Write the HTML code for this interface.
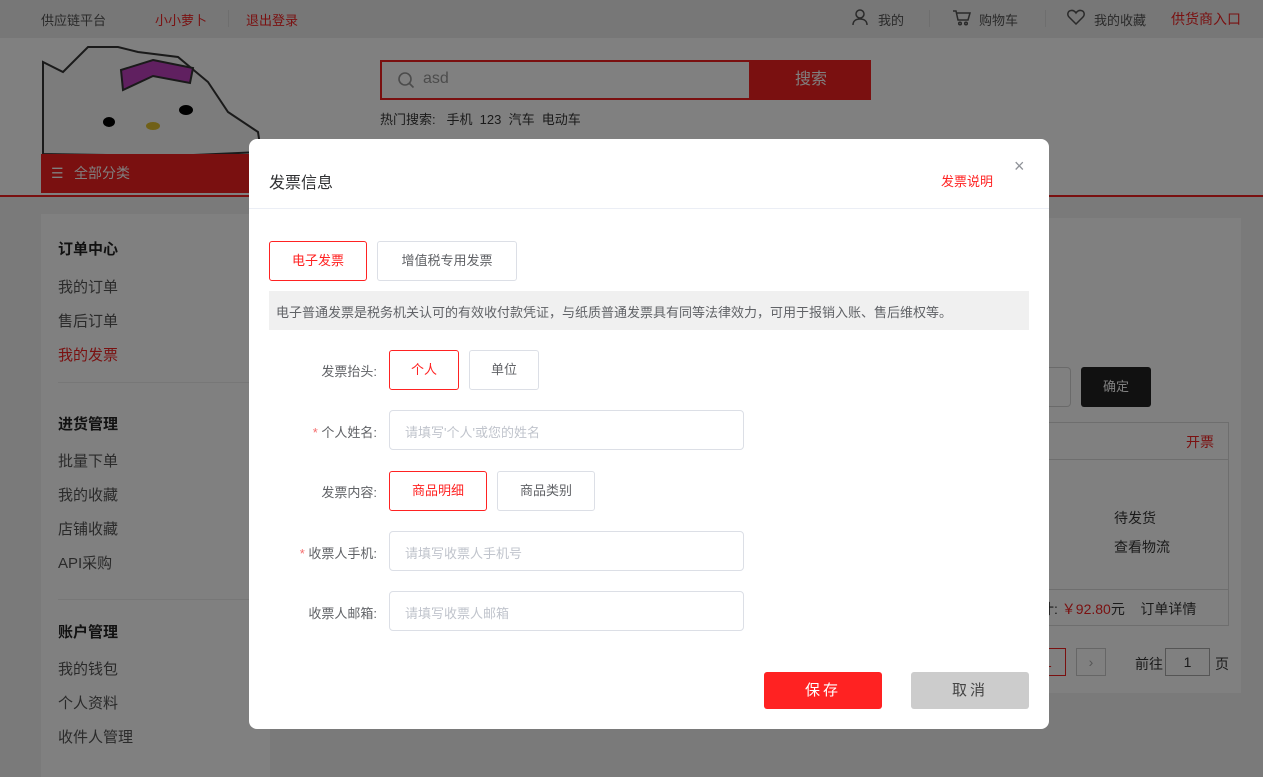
<!DOCTYPE html>
<html style="width:1263px;height:777px;overflow:hidden;background:#7a7a7a"><head><meta charset="utf-8"><style>
*{margin:0;padding:0;box-sizing:border-box}
body{width:1263px;height:777px;overflow:hidden;position:relative;background:#7a7a7a;font-family:"Liberation Sans","Noto Sans CJK SC",sans-serif;font-size:14px;color:#1a1a1a}
.abs{position:absolute}
.top{left:0;top:0;width:1263px;height:38px;background:#777;font-size:13px}
.top span{position:absolute;top:10px}
.hdr{left:0;top:38px;width:1263px;height:159px;background:#808080;border-bottom:2px solid #7a1010}
.side{left:41px;top:214px;width:229px;height:563px;background:#808080}
.side div{position:absolute;left:17px;font-size:15px;color:#2a2a2a}
.side .h{font-weight:bold;color:#111}
.main{left:290px;top:218px;width:951px;height:475px;background:#808080}
.modal{left:249px;top:139px;width:800px;height:590px;background:#fff;border-radius:8px}
.btn{position:absolute;border:1px solid #dcdfe6;border-radius:3px;text-align:center;font-size:13px;color:#606266;background:#fff}
.btn.on{border-color:#f22;color:#f22}
.lab{position:absolute;width:128px;text-align:right;font-size:13px;color:#606266}
.inp{position:absolute;left:140px;width:355px;height:40px;border:1px solid #dcdfe6;border-radius:4px;font-size:13px;color:#c0c4cc;padding:11px 15px}
.star{color:#f56c6c}
</style></head><body>
<div class="abs top">
<span style="left:41px;color:#2a2a2a">供应链平台</span>
<span style="left:155px;color:#7a1010">小小萝卜</span>
<span style="left:228px;top:10px;width:1px;height:17px;background:#6e6e6e"></span>
<span style="left:246px;color:#7a1010">退出登录</span>
<svg class="abs" style="left:851px;top:8px" width="18" height="18" viewBox="0 0 18 18" fill="none" stroke="#2a2a2a" stroke-width="1.5"><circle cx="9" cy="6" r="4"/><path d="M2 17c0-4 3-6 7-6s7 2 7 6"/></svg>
<span style="left:878px;color:#2a2a2a">我的</span>
<span style="left:929px;width:1px;height:17px;background:#6e6e6e"></span>
<svg class="abs" style="left:952px;top:9px" width="19" height="17" viewBox="0 0 19 17" fill="none" stroke="#2a2a2a" stroke-width="1.5"><path d="M1 2h3l2 9h10l2-7H5"/><circle cx="8" cy="14.5" r="1.3"/><circle cx="14" cy="14.5" r="1.3"/></svg>
<span style="left:979px;color:#2a2a2a">购物车</span>
<span style="left:1045px;width:1px;height:17px;background:#6e6e6e"></span>
<svg class="abs" style="left:1067px;top:9px" width="18" height="16" viewBox="0 0 18 16" fill="none" stroke="#2a2a2a" stroke-width="1.5"><path d="M9 15L2 8C0 6 0.5 2 4 1.5 6 1.2 8 2.5 9 4c1-1.5 3-2.8 5-2.5 3.5.5 4 4.5 2 6.5z"/></svg>
<span style="left:1094px;color:#2a2a2a">我的收藏</span>
<span style="left:1171px;color:#7a1010;font-size:14px;top:9px">供货商入口</span>
</div>
<div class="abs hdr">
<svg class="abs" style="left:41px;top:4px" width="230" height="112" viewBox="0 0 230 112">
<path d="M2 20l20 10 25-25 30 0 20 5 40 5 30 25 20 30 30 20 3 20-90 4L2 112z" fill="#7c7c7c" stroke="#1a1a1a" stroke-width="2"/>
<path d="M112 18l40 8-3 15-37-7-30 14-2-20z" fill="#602060" stroke="#1a1a1a" stroke-width="2"/>
<ellipse cx="68" cy="80" rx="6" ry="5" fill="#000"/><ellipse cx="145" cy="68" rx="7" ry="5" fill="#000"/><ellipse cx="112" cy="84" rx="7" ry="4" fill="#706018"/>
</svg>
<div class="abs" style="left:380px;top:22px;width:371px;height:40px;border:2px solid #7a1010;background:#808080"><svg class="abs" style="left:15px;top:9px" width="18" height="18" viewBox="0 0 18 18" fill="none" stroke="#4c4c4c" stroke-width="1.6"><circle cx="8" cy="8" r="6"/><path d="M12.5 12.5l4 4"/></svg><span class="abs" style="left:41px;top:8px;font-size:16px;color:#4c4c4c">asd</span></div>
<div class="abs" style="left:751px;top:22px;width:120px;height:40px;background:#7a1010;color:#808080;font-size:16px;text-align:center;line-height:40px">搜索</div>
<div class="abs" style="left:380px;top:71px;font-size:13px;color:#1a1a1a">热门搜索:&nbsp;&nbsp; 手机 &nbsp;123 &nbsp;汽车 &nbsp;电动车</div>
<div class="abs" style="left:41px;top:116px;width:215px;height:39px;background:#7a1010;color:#808080;font-size:14px;line-height:39px;padding-left:33px">全部分类<span class="abs" style="left:10px;top:0">☰</span></div>
</div>
<div class="abs side">
<div class="h" style="top:24px">订单中心</div>
<div style="top:62px">我的订单</div><div style="top:96px">售后订单</div><div style="top:130px;color:#7a1010">我的发票</div>
<div style="top:168px;width:212px;height:1px;background:#777"></div>
<div class="h" style="top:199px">进货管理</div>
<div style="top:236px">批量下单</div><div style="top:270px">我的收藏</div><div style="top:304px">店铺收藏</div><div style="top:338px">API采购</div>
<div style="top:385px;width:212px;height:1px;background:#777"></div>
<div class="h" style="top:407px">账户管理</div>
<div style="top:444px">我的钱包</div><div style="top:478px">个人资料</div><div style="top:512px">收件人管理</div>
</div>
<div class="abs main">
<div class="abs" style="left:740px;top:149px;width:41px;height:40px;border:1px solid #6a6a6a;border-left:none;border-radius:0 4px 4px 0"></div>
<div class="abs" style="left:791px;top:149px;width:70px;height:40px;background:#111;color:#808080;border-radius:3px;text-align:center;line-height:40px;font-size:13px">确定</div>
<div class="abs" style="left:740px;top:204px;width:199px;height:204px;border:1px solid #6e6e6e;border-left:none"></div>
<div class="abs" style="left:740px;top:241px;width:199px;height:1px;background:#6e6e6e"></div>
<div class="abs" style="left:740px;top:371px;width:199px;height:1px;background:#6e6e6e"></div>
<div class="abs" style="left:756px;top:241px;width:1px;height:130px;background:#6e6e6e"></div>
<div class="abs" style="left:896px;top:214px;color:#7a1010;font-size:14px">开票</div>
<div class="abs" style="left:824px;top:290px;font-size:14px">待发货</div>
<div class="abs" style="left:824px;top:319px;font-size:14px">查看物流</div>
<div class="abs" style="left:750px;top:381px;font-size:14px">计: <span style="color:#7a1010">￥92.80</span>元 &nbsp;&nbsp;&nbsp;订单详情</div>
<div class="abs" style="left:740px;top:430px;width:36px;height:28px;border:1px solid #7a1010;border-left:none;color:#7a1010;padding-left:14px;line-height:26px">1</div>
<div class="abs" style="left:786px;top:430px;width:30px;height:28px;border:1px solid #666;color:#555;text-align:center;line-height:26px">›</div>
<div class="abs" style="left:845px;top:436px">前往</div>
<div class="abs" style="left:875px;top:430px;width:45px;height:28px;border:1px solid #555;text-align:center;line-height:26px">1</div>
<div class="abs" style="left:925px;top:436px">页</div>
</div>
<div class="abs modal">
<div class="abs" style="left:20px;top:30px;font-size:16px;color:#303133">发票信息</div>
<div class="abs" style="left:692px;top:32px;font-size:13px;color:#f22">发票说明</div>
<div class="abs" style="left:765px;top:18px;font-size:18px;color:#909399;line-height:18px">×</div>
<div class="abs" style="left:0;top:69px;width:800px;height:1px;background:#ebeef5"></div>
<div class="btn on" style="left:20px;top:102px;width:98px;height:40px;line-height:38px">电子发票</div>
<div class="btn" style="left:128px;top:102px;width:140px;height:40px;line-height:38px">增值税专用发票</div>
<div class="abs" style="left:20px;top:152px;width:760px;height:39px;background:#f0f0f0;font-size:13px;color:#606266;padding:11px 7px">电子普通发票是税务机关认可的有效收付款凭证，与纸质普通发票具有同等法律效力，可用于报销入账、售后维权等。</div>
<div style="position:absolute;left:0;top:211px;width:800px">
<div class="lab" style="top:11px">发票抬头:</div>
<div class="btn on" style="left:140px;top:0;width:70px;height:40px;line-height:38px">个人</div>
<div class="btn" style="left:220px;top:0;width:70px;height:40px;line-height:38px">单位</div>
<div class="lab" style="top:72px"><span class="star">*</span> 个人姓名:</div>
<div class="inp" style="top:60px">请填写'个人'或您的姓名</div>
<div class="lab" style="top:132px">发票内容:</div>
<div class="btn on" style="left:140px;top:121px;width:98px;height:40px;line-height:38px">商品明细</div>
<div class="btn" style="left:248px;top:121px;width:98px;height:40px;line-height:38px">商品类别</div>
<div class="lab" style="top:193px"><span class="star">*</span> 收票人手机:</div>
<div class="inp" style="top:181px">请填写收票人手机号</div>
<div class="lab" style="top:253px">收票人邮箱:</div>
<div class="inp" style="top:241px">请填写收票人邮箱</div>
</div>
<div class="abs" style="left:515px;top:533px;width:118px;height:37px;background:#f22;color:#fff;border-radius:3px;text-align:center;line-height:37px;font-size:15px;letter-spacing:3px">保存</div>
<div class="abs" style="left:662px;top:533px;width:118px;height:37px;background:#ccc;color:#444;border-radius:3px;text-align:center;line-height:37px;font-size:15px;letter-spacing:3px">取消</div>
</div>
</body></html>
